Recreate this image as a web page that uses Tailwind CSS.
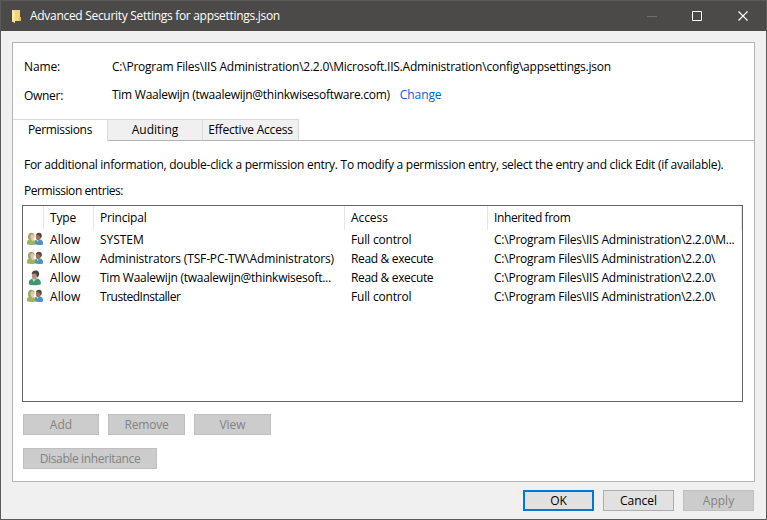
<!DOCTYPE html>
<html lang="en">
<head>
<meta charset="utf-8">
<title>Advanced Security Settings for appsettings.json</title>
<script src="https://cdn.jsdelivr.net/npm/@tailwindcss/browser@4"></script>
</head>
<body class="overflow-hidden">
<svg class="hidden">
  <symbol id="group" viewBox="0 0 16 14">
    <path d="M7.500 12.300V9.800C7.700 8.400 9 7.700 10.300 7.400h3c1.700.4 2.700 1.600 2.700 3.600v1.500c-2.400.8-6.100.7-8.500-.2z" fill="#5290bd"/>
    <path d="M9.400 7.600l1 2.600 1.500-2.600z" fill="#b5d6e8"/>
    <ellipse cx="11.200" cy="4.900" rx="2.300" ry="3.100" fill="#a1714f"/>
    <path d="M8.900 3.500C9.200 1.500 10.500.8 12 .8c2.200 0 3.300 1.600 2.700 3.800-.2 1-.7 1.700-1.300 2.200C13 5 12.800 3.600 11.600 3.200c-1-.2-1.800 0-2.700.3z" fill="#514b46"/>
    <path d="M0 12.200V10C.2 8.500 1.200 7.600 2.700 7.300h2.900c1.600.4 2.400 1.500 2.400 3.100v2c-2.400.8-5.600.7-8-.2z" fill="#9fb457"/>
    <path d="M1 6.500C.7 2.800 1.800.8 4.300.8c2.200 0 3.400 1.500 3.100 3.500L5.800 7.500 2.700 8z" fill="#a9a273"/>
    <ellipse cx="5.400" cy="5" rx="1.900" ry="2.700" fill="#e8c9a5"/>
    <path d="M4.200 7.400h2.400l-.7 2.100z" fill="#f0dabd"/>
  </symbol>
  <symbol id="user" viewBox="0 0 16 16">
    <path d="M1.800 14.300v-2.200c.2-1.800 1.500-2.700 3.700-3.500l4.500-.1c2.500.6 3.800 1.800 3.800 4v1.800c-3.300 1.300-8.700 1.300-12 0z" fill="#3f9670"/>
    <path d="M5.200 8.700l1.300 3.300 3-3.300z" fill="#c3dfd0"/>
    <ellipse cx="7.400" cy="5.600" rx="2.500" ry="3.600" fill="#b98e70"/>
    <path d="M4.600 4.300C4.800 1.800 6.200.4 8.400.4c2.900 0 4.300 2 3.600 4.700-.3 1.200-.9 2-1.700 2.600C9.800 5.600 9.500 4 8 3.500c-1.200-.3-2.300 0-3.400.8z" fill="#474440"/>
  </symbol>
</svg>
<div class="flex h-[520px] w-[767px] flex-col border border-[#5b5a59] bg-[#f0f0f0] font-['Open_Sans','Noto_Sans',sans-serif] text-[12px] leading-[16px] whitespace-nowrap text-black">
  <header class="flex h-[30px] shrink-0 items-center bg-[#4c4a48] text-white">
    <svg class="ml-[10px] h-[14px] w-[10px]" viewBox="0 0 10 14"><path d="M1 1h8v7h1v4H1z" fill="#f3d478"/><path d="M8 8h2v4H8z" fill="#e3bd5c"/><path d="M1 1l3 1.500V14l-3-1.500z" fill="#ffe79c"/></svg>
    <h1 class="ml-[9px] flex-1 tracking-[-0.3px]">Advanced Security Settings for appsettings.json</h1>
    <svg class="mr-[18px] h-[12px] w-[102px]" viewBox="0 0 102 12" fill="none"><path d="M1 6.500h10" stroke="#716f6d"/><path d="M46.500 1.500h9v9h-9z" stroke="#fff"/><path d="M92.500 1.500l9 9M101.500 1.500l-9 9" stroke="#fff" stroke-width="1.200"/></svg>
  </header>

  <main class="mx-[11px] mt-[11px] flex h-[440px] shrink-0 flex-col border border-[#b4b4b4] bg-white">
    <dl class="grid h-[76px] grid-cols-[88px_1fr] grid-rows-[29px_28px] pt-[16px] pl-[11px]">
      <dt class="tracking-[-0.14px]">Name:</dt>
      <dd class="tracking-[-0.23px]">C:\Program Files\IIS Administration\2.2.0\Microsoft.IIS.Administration\config\appsettings.json</dd>
      <dt class="tracking-[-0.3px]">Owner:</dt>
      <dd class="-mt-px flex gap-[10px] tracking-[-0.26px]"><span>Tim Waalewijn (twaalewijn@thinkwisesoftware.com)</span><a class="tracking-[-0.1px] text-[#0066cc]">Change</a></dd>
    </dl>

    <nav class="flex h-[22px] shrink-0 text-center leading-[20px]">
      <div class="w-[95px] border-t border-r border-[#d9d9d9] tracking-[-0.34px]">Permissions</div>
      <div class="w-[95px] border-t border-r border-b border-[#d9d9d9] border-b-[#b4b4b4] bg-[#f0f0f0] tracking-[0.02px]">Auditing</div>
      <div class="w-[96px] border-t border-r border-b border-[#d9d9d9] border-b-[#b4b4b4] bg-[#f0f0f0] tracking-[-0.2px]">Effective Access</div>
      <div class="flex-1 border-b border-[#b4b4b4]"></div>
    </nav>

    <section class="flex flex-1 flex-col pr-[11px] pl-[9px]">
      <p class="mt-[16px] pl-[2px] tracking-[-0.277px]">For additional information, double-click a permission entry. To modify a permission entry, select the entry and click Edit (if available).</p>
      <h2 class="mt-[10px] pl-[2px] tracking-[-0.42px]">Permission entries:</h2>

      <div class="mt-[6px] h-[197px] shrink-0 border border-[#646464]">
        <div class="grid h-[24px] grid-cols-[21px_50px_251px_143px_254px] leading-[24px] *:border-r *:border-[#e5e5e5] *:pl-[6px]">
          <div></div>
          <div class="tracking-[-0.18px]">Type</div>
          <div class="tracking-[-0.2px]">Principal</div>
          <div class="tracking-[-0.08px]">Access</div>
          <div class="tracking-[-0.36px]">Inherited from</div>
        </div>
        <div class="grid h-[19px] grid-cols-[27px_50px_251px_143px_1fr] leading-[20px]">
          <svg class="mt-[2px] ml-[4px] h-[14px] w-[16px]"><use href="#group"/></svg>
          <div class="tracking-[0.05px]">Allow</div><div class="tracking-[-0.05px]">SYSTEM</div><div class="tracking-[-0.17px]">Full control</div><div class="tracking-[-0.23px]">C:\Program Files\IIS Administration\2.2.0\M...</div>
        </div>
        <div class="grid h-[19px] grid-cols-[27px_50px_251px_143px_1fr] leading-[20px]">
          <svg class="mt-[2px] ml-[4px] h-[14px] w-[16px]"><use href="#group"/></svg>
          <div class="tracking-[0.05px]">Allow</div><div class="tracking-[-0.16px]">Administrators (TSF-PC-TW\Administrators)</div><div class="tracking-[-0.34px]">Read &amp; execute</div><div class="tracking-[-0.23px]">C:\Program Files\IIS Administration\2.2.0\</div>
        </div>
        <div class="grid h-[19px] grid-cols-[27px_50px_251px_143px_1fr] leading-[20px]">
          <svg class="mt-[2px] ml-[4px] h-[16px] w-[16px]"><use href="#user"/></svg>
          <div class="tracking-[0.05px]">Allow</div><div class="tracking-[-0.25px]">Tim Waalewijn (twaalewijn@thinkwisesoft...</div><div class="tracking-[-0.34px]">Read &amp; execute</div><div class="tracking-[-0.23px]">C:\Program Files\IIS Administration\2.2.0\</div>
        </div>
        <div class="grid h-[19px] grid-cols-[27px_50px_251px_143px_1fr] leading-[20px]">
          <svg class="mt-[2px] ml-[4px] h-[14px] w-[16px]"><use href="#group"/></svg>
          <div class="tracking-[0.05px]">Allow</div><div class="tracking-[-0.48px]">TrustedInstaller</div><div class="tracking-[-0.17px]">Full control</div><div class="tracking-[-0.23px]">C:\Program Files\IIS Administration\2.2.0\</div>
        </div>
      </div>

      <div class="mt-[12px] ml-px flex gap-[9px] text-center leading-[20px] text-[#838383] *:h-[21px] *:border *:border-[#bfbfbf] *:bg-[#cccccc]">
        <button class="w-[76px] tracking-[0.1px]">Add</button>
        <button class="w-[77px] tracking-[-0.2px]">Remove</button>
        <button class="w-[77px] tracking-[-0.06px]">View</button>
      </div>
      <button class="mt-[13px] ml-px h-[21px] w-[134px] border border-[#bfbfbf] bg-[#cccccc] leading-[20px] tracking-[-0.37px] text-[#838383]">Disable inheritance</button>
    </section>
  </main>

  <footer class="mt-[8px] mr-[12px] flex justify-end gap-[9px] *:h-[21px] *:w-[71px]">
    <button class="border-2 border-[#0078d7] bg-[#e1e1e1] leading-[18px]">OK</button>
    <button class="border border-[#adadad] bg-[#e1e1e1] leading-[20px] tracking-[-0.04px]">Cancel</button>
    <button class="border border-[#bfbfbf] bg-[#cccccc] leading-[20px] text-[#838383]">Apply</button>
  </footer>
</div>
</body>
</html>
